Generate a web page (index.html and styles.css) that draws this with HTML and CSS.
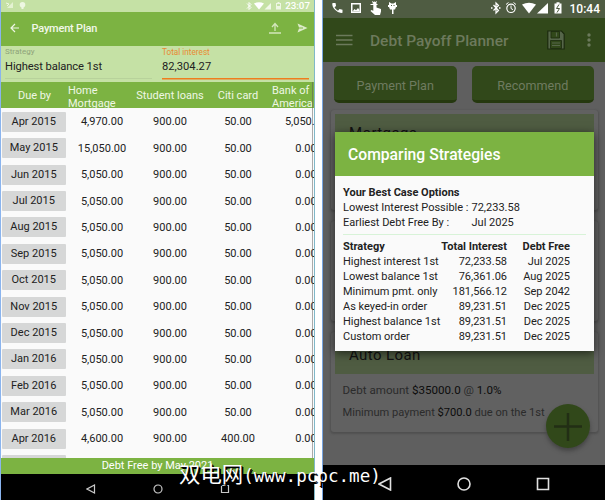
FILE: index.html
```
<!doctype html>
<html lang="en">
<head>
  <meta charset="utf-8" />
  <meta name="viewport" content="width=device-width, initial-scale=1.0" />
  <title>Debt Payoff Planner</title>
  <link rel="stylesheet" href="styles.css">
</head>
<body>
  <div class="screens">
    <div class="phone plan">
      <div class="status">
        <svg width="30" height="12" viewBox="0 0 30 12" fill="#eef7e2">
          <path d="M6 8h6V2z" opacity=".75"/><path d="M5 3l3 1-2 2" fill="none" stroke="#eef7e2"/>
          <circle cx="21.500" cy="4.800" r="2.800"/><path d="M20.500 6h2v3h-2z"/>
        </svg>
        <svg class="push" width="38" height="12" viewBox="0 0 38 12" fill="#fff">
          <path d="M1 3.500l4 4-2 2v-7l2 2-4 4" fill="none" stroke="#fff" stroke-width=".9"/>
          <path d="M8 3.500q5-2.500 10 0L13 9.500z"/><path d="M18.500 9.500h6.500V3z" opacity=".75"/>
          <path d="M30 3h1.500V2h2v1H35v6.500h-5z" opacity=".7"/><path d="M31 4h3v2h-3z" fill="#c5e1a5"/>
        </svg>
        <span class="clock">23:07</span>
      </div>
      <div class="toolbar">
        <svg width="10" height="10" viewBox="0 0 10 10" fill="none" stroke="#eef6e4" stroke-width="1.200"><path d="M9 5H1.500M5 1L1 5l4 4"/></svg>
        <h1>Payment Plan</h1>
        <svg class="push" width="14" height="12" viewBox="0 0 14 12" fill="none" stroke="#d2e6bb" stroke-width="1.300"><path d="M1 11h12M7 9V2M4 5l3-3.500L10 5"/></svg>
        <svg width="12" height="12" viewBox="0 0 12 12" fill="#dcebc9"><path d="M1.500 1.500L11.500 6l-10 4.500L3 6.600h4V5.400H3z"/></svg>
      </div>
      <div class="summary">
        <div class="field">
          <label>Strategy</label>
          <div class="value">Highest balance 1st</div>
        </div>
        <div class="field active">
          <label>Total interest</label>
          <div class="value">82,304.27</div>
        </div>
      </div>
      <div class="row head">
        <div>Due by</div>
        <div class="wrap">Home<br>Mortgage</div>
        <div>Student loans</div>
        <div>Citi card</div>
        <div class="wrap">Bank of<br>America</div>
      </div>
      <div class="rows">
        <div class="row"><div class="chip">Apr 2015</div><div>4,970.00</div><div>900.00</div><div>50.00</div><div>5,050.00</div></div>
        <div class="row"><div class="chip">May 2015</div><div>15,050.00</div><div>900.00</div><div>50.00</div><div>0.00</div></div>
        <div class="row"><div class="chip">Jun 2015</div><div>5,050.00</div><div>900.00</div><div>50.00</div><div>0.00</div></div>
        <div class="row"><div class="chip">Jul 2015</div><div>5,050.00</div><div>900.00</div><div>50.00</div><div>0.00</div></div>
        <div class="row"><div class="chip">Aug 2015</div><div>5,050.00</div><div>900.00</div><div>50.00</div><div>0.00</div></div>
        <div class="row"><div class="chip">Sep 2015</div><div>5,050.00</div><div>900.00</div><div>50.00</div><div>0.00</div></div>
        <div class="row"><div class="chip">Oct 2015</div><div>5,050.00</div><div>900.00</div><div>50.00</div><div>0.00</div></div>
        <div class="row"><div class="chip">Nov 2015</div><div>5,050.00</div><div>900.00</div><div>50.00</div><div>0.00</div></div>
        <div class="row"><div class="chip">Dec 2015</div><div>5,050.00</div><div>900.00</div><div>50.00</div><div>0.00</div></div>
        <div class="row"><div class="chip">Jan 2016</div><div>5,050.00</div><div>900.00</div><div>50.00</div><div>0.00</div></div>
        <div class="row"><div class="chip">Feb 2016</div><div>5,050.00</div><div>900.00</div><div>50.00</div><div>0.00</div></div>
        <div class="row"><div class="chip">Mar 2016</div><div>5,050.00</div><div>900.00</div><div>50.00</div><div>0.00</div></div>
        <div class="row"><div class="chip">Apr 2016</div><div>4,600.00</div><div>900.00</div><div>400.00</div><div>0.00</div></div>
        <div class="row"><div class="chip"></div></div>
      </div>
      <div class="scrollbar"></div>
      <div class="total">Debt Free by May 2021</div>
      <div class="nav">
        <svg width="10" height="10" viewBox="0 0 10 10"><path d="M8.500 1v8L1 5z"/></svg>
        <svg width="10" height="10" viewBox="0 0 10 10"><circle cx="5" cy="5" r="4"/></svg>
        <svg width="10" height="10" viewBox="0 0 10 10"><path d="M1.500 1.500h7v7h-7z"/></svg>
      </div>
    </div>

    <div class="phone debts">
      <div class="status">
        <svg width="72" height="18" viewBox="0 0 72 18" fill="#fff">
          <path d="M1.500 3h3l.6 3-1.600 1.200q1.200 2.500 3.500 3.500L8.500 9l3 .8v3q-4 .8-7.500-3T1.500 3z"/>
          <path d="M20 3h10v10H20zm1.500 1.500v7h7v-7z" fill-rule="evenodd"/><path d="M21.500 11.500l2-2.500 1.500 1.300L27 8l1.500 2v1.500z"/>
          <path d="M41.500 3.500q0-2 2-2t2 2v4l4.500 1.500v2.500l-1 3.500h-5l-4.500-4 .8-1 2 .8V3.500z"/><path d="M39.500 4.500h7M41 1.500l2 1.500M46 1.500L44 3" stroke="#fff"/>
          <path d="M58 2l2.500 1.500h2L65 2v3h1v2h-1l-1 2.500h-5L58 7h-1V5h1zM61 9h1.500v5H61z"/><path d="M60 5h1v1h-1zM62.500 5h1v1h-1z" fill="#4f5c42"/>
        </svg>
        <svg class="push" width="74" height="18" viewBox="0 0 74 18" fill="#fff">
          <path d="M2.500 5l5 5.500L5 13V3l2.500 2.500-5 5" fill="none" stroke="#fff" stroke-width="1.200"/><path d="M0 7.300h1.500v1.400H0zM8 7.300h1.500v1.400H8z"/>
          <circle cx="20" cy="8.300" r="4.200" fill="none" stroke="#fff" stroke-width="1.200"/><path d="M20 5.500v3l2 1.200M15 4.500l2.500-2M25 4.500l-2.500-2" fill="none" stroke="#fff"/>
          <path d="M31 4.500q7-3.500 14 0L38 13.500z"/><path d="M46 13.500h11V3z"/>
          <path d="M63.500 3.500h2V2.300h3v1.200h2v10h-7z"/><path d="M68 4.500l-2.500 4h3L66 12.500" fill="none" stroke="#4f5c42"/>
        </svg>
        <span class="clock">10:44</span>
      </div>
      <div class="toolbar">
        <svg width="17" height="12" viewBox="0 0 17 12" fill="none" stroke="#6c7a5c" stroke-width="1.600"><path d="M0 1.500h16.500M0 6h16.500M0 10.500h16.500"/></svg>
        <h1>Debt Payoff Planner</h1>
        <svg class="push" width="18" height="20" viewBox="0 0 18 20" fill="none" stroke="#1c2b0e">
          <path d="M.8 1h13.700l2.700 3v15H.8z" fill="#56664a" stroke-width="1.200"/>
          <path d="M4 1.500h8.500V8H4zM3.500 10.500h11v8h-11z" fill="#31481a" stroke-width=".8"/>
          <path d="M9.500 2.500v4M5 13h8M5 15.500h8" stroke="#56664a" stroke-width="1.200"/>
        </svg>
        <svg width="4" height="14" viewBox="0 0 4 14" fill="#6c7a5c"><circle cx="2" cy="2" r="1.700"/><circle cx="2" cy="7" r="1.700"/><circle cx="2" cy="12" r="1.700"/></svg>
      </div>
      <div class="content">
        <div class="buttons">
          <button>Payment Plan</button>
          <button>Recommend</button>
        </div>
        <div class="card"><h2>Mortgage</h2></div>
        <div class="card"></div>
        <div class="card">
          <h2>Auto Loan</h2>
          <p>Debt amount <b>$35000.0</b> @ <b>1.0%</b></p>
          <p class="small">Minimum payment <b>$700.0</b> due on the 1st</p>
        </div>
      </div>
      <div class="fab">
        <svg width="44" height="44" viewBox="0 0 44 44" stroke="#222e15" stroke-width="2.500"><path d="M8 22.500h28M22 9v28"/></svg>
      </div>
      <div class="nav">
        <svg width="14" height="14" viewBox="0 0 14 14"><path d="M12.500 1v12L1 7z"/></svg>
        <svg width="14" height="14" viewBox="0 0 14 14"><circle cx="7" cy="7" r="6"/></svg>
        <svg width="14" height="14" viewBox="0 0 14 14"><path d="M1.500 1.500h11v11h-11z"/></svg>
      </div>

      <div class="dialog">
        <h2>Comparing Strategies</h2>
        <div class="best">
          <b>Your Best Case Options</b>
          <div class="option"><span class="name">Lowest Interest Possible :</span><span>72,233.58</span></div>
          <div class="option"><span class="name">Earliest Debt Free By :</span><span>Jul 2025</span></div>
        </div>
        <table>
          <tr><th>Strategy</th><th>Total Interest</th><th>Debt Free</th></tr>
          <tr><td>Highest interest 1st</td><td>72,233.58</td><td>Jul 2025</td></tr>
          <tr><td>Lowest balance 1st</td><td>76,361.06</td><td>Aug 2025</td></tr>
          <tr><td>Minimum pmt. only</td><td>181,566.12</td><td>Sep 2042</td></tr>
          <tr><td>As keyed-in order</td><td>89,231.51</td><td>Dec 2025</td></tr>
          <tr><td>Highest balance 1st</td><td>89,231.51</td><td>Dec 2025</td></tr>
          <tr><td>Custom order</td><td>89,231.51</td><td>Dec 2025</td></tr>
        </table>
      </div>
    </div>
  </div>
  <div class="watermark">双电网<span>(www.pcpc.me)</span></div>
</body>
</html>
```
FILE: styles.css
```
* {
  box-sizing: border-box;
}
body {
  margin: 0;
  background: #fff;
  font-family: Roboto, "Liberation Sans", sans-serif;
  font-size: 11px;
  color: #222;
}
h1, h2, p {
  margin: 0;
  font-weight: 500;
}
svg {
  display: block;
  flex: none;
}
.screens {
  display: flex;
  justify-content: space-between;
  height: 500px;
  overflow: hidden;
}
.phone {
  position: relative;
  display: flex;
  flex-direction: column;
  height: 500px;
  overflow: hidden;
}
.status, .toolbar {
  display: flex;
  align-items: center;
  flex: none;
}
.push {
  margin-left: auto;
}
.clock {
  color: #fff;
}
.nav {
  display: flex;
  align-items: center;
  background: #000;
}
.nav svg {
  fill: none;
  stroke: #c8c8c8;
  stroke-width: 1.2;
}

/* payment plan */
.plan {
  width: 315px;
  border-left: 1px solid #8ab4ee;
  border-right: 1px solid #80b8c8;
  background: #fafafa;
}
.plan .status {
  height: 12px;
  padding-right: 4px;
  background: #c5e1a5;
}
.plan .clock {
  font-size: 9.8px;
  font-weight: 500;
  line-height: 12px;
  margin-left: 1px;
}
.plan .toolbar {
  height: 33.5px;
  padding: 0 6px 2px 9px;
  background: #7cb342;
}
.plan h1 {
  margin-left: 11.5px;
  padding-top: 1px;
  font-size: 11px;
  letter-spacing: -0.2px;
  color: #f2f8ea;
}
.plan .toolbar .push {
  margin-right: 14px;
}
.summary {
  display: flex;
  gap: 10px;
  height: 36.5px;
  padding: 1px 4px 3px;
  background: #c5e1a5;
}
.field {
  width: 147px;
  border-bottom: 1px solid #b8d29b;
}
.field.active {
  border-bottom-color: #ef7d1e;
  box-shadow: 0 0.5px 0 #ef7d1e;
}
.field label {
  display: block;
  font-size: 8px;
  line-height: 10px;
  color: #8fa37a;
}
.field.active label {
  font-size: 8.2px;
  color: #e88a33;
}
.field .value {
  font-size: 11.2px;
  letter-spacing: -0.1px;
  line-height: 19px;
}
.field.active .value {
  letter-spacing: 0;
}
.row {
  display: flex;
  align-items: center;
  width: 340px;
  height: 26.42px;
}
.row > div {
  flex: none;
  width: 68px;
  text-align: center;
}
.head {
  height: 26px;
  width: 313px;
  overflow: hidden;
  background: #7cb342;
  color: #eff7e5;
  flex: none;
}
.head > div:first-child {
  width: 67px;
}
.head > div {
  padding-top: 1px;
}
.row .wrap {
  text-align: left;
  line-height: 13px;
  padding-left: 0;
  padding-top: 3px;
}
.rows {
  height: 350px;
  padding-top: 0.6px;
  overflow: hidden;
  flex: none;
}
.row > .chip {
  width: 64.5px;
  height: 20px;
  margin: 0 2px 0 0.5px;
  border-radius: 1px;
  background: #d6d7d7;
  line-height: 20px;
}
.scrollbar {
  position: absolute;
  top: 82px;
  right: 1px;
  width: 1.5px;
  height: 376px;
  background: rgba(90, 90, 90, 0.5);
}
.total {
  height: 16px;
  background: #7cb342;
  color: #fff;
  line-height: 16px;
  text-align: center;
}
.plan .nav {
  height: 26px;
  padding: 4px 0 0 84.5px;
  gap: 57px;
}

/* debt list, dimmed behind the dialog */
.debts {
  width: 283px;
  border-left: 1px solid #78a5e0;
  background: #5f5f5f;
}
.debts .status {
  height: 18px;
  padding: 0 5px 0 8px;
  background: #4f5c42;
}
.debts .clock {
  font-size: 12px;
  font-weight: 500;
  margin-left: 5px;
}
.debts .toolbar {
  height: 44px;
  padding: 0 14px 0 13px;
  background: #31481a;
}
.debts h1 {
  margin-left: 17px;
  padding-top: 1px;
  font-size: 15.5px;
  color: #6d7a5d;
}
.debts .toolbar .push {
  margin-right: 22px;
}
.content {
  flex: none;
  height: 403px;
  padding: 4px 7px 0 8px;
}
.buttons {
  display: flex;
  gap: 15px;
  height: 37px;
  padding: 0 4px 0 3px;
}
.buttons button {
  flex: 1;
  border: 0;
  border-bottom: 3px solid #25380f;
  border-radius: 5px;
  background: #31481a;
  color: #6f7b60;
  font: 12.6px Roboto, sans-serif;
  padding: 4px 0 0;
}
.card {
  height: 100px;
  margin-top: 11px;
  padding: 4px;
  border-radius: 3px;
  background: #616161;
  box-shadow: 0 1px 2px 1px #505050;
}
.buttons + .card {
  margin-top: 7px;
}
.card h2 {
  height: 38px;
  padding-left: 14px;
  background: #4f5c42;
  color: #111;
  font-size: 15px;
  font-weight: 400;
  line-height: 38px;
  letter-spacing: 0.4px;
}
.card p {
  padding: 7px 0 0 7.5px;
  font-size: 11.6px;
  font-weight: 400;
  line-height: 18px;
  color: #2b2b2b;
}
.card p.small {
  padding-top: 5px;
  font-size: 11.1px;
}
.card b {
  font-weight: 400;
  color: #0c0c0c;
}
.fab {
  position: absolute;
  right: 15px;
  top: 404px;
  width: 44px;
  height: 44px;
  border-radius: 50%;
  background: #31481a;
  box-shadow: 0 3px 4px #444;
}
.debts .nav {
  height: 35px;
  padding: 3px 0 0 55px;
  gap: 65px;
}
.debts .nav svg {
  stroke: #e0e0e0;
  stroke-width: 1.6;
}
.dialog {
  position: absolute;
  left: 12px;
  top: 132px;
  width: 259px;
  height: 218.5px;
  background: #fafafa;
  box-shadow: 0 2px 9px rgba(0, 0, 0, 0.6);
}
.dialog h2 {
  height: 44px;
  padding: 1px 0 0 13px;
  background: #7cb342;
  color: #fff;
  font-size: 15.7px;
  line-height: 44px;
}
.best {
  margin: 0 8px;
  padding: 9px 0 3.5px;
  border-bottom: 1px solid #d8f3d8;
  line-height: 15px;
}
.best b {
  display: block;
  font-size: 11px;
}
.option {
  display: flex;
}
.option .name {
  width: 128.5px;
  white-space: nowrap;
}
.dialog table {
  width: 227px;
  margin: 4.5px 0 0 8px;
  border-collapse: collapse;
  line-height: 15px;
  white-space: nowrap;
}
.dialog th, .dialog td {
  padding: 0;
  text-align: right;
}
.dialog th:first-child, .dialog td:first-child {
  width: 97px;
  text-align: left;
}
.dialog th:last-child, .dialog td:last-child {
  width: 63px;
}

.watermark {
  position: absolute;
  left: 179px;
  top: 458px;
  color: #fff;
  font: 21.4px/30px "Noto Sans CJK SC", sans-serif;
  text-shadow: 1px 1px 0 #000, 2px 2px 0 #000;
  white-space: nowrap;
}
.watermark span {
  font-family: "DejaVu Sans Mono", monospace;
  font-size: 17.6px;
}
```
